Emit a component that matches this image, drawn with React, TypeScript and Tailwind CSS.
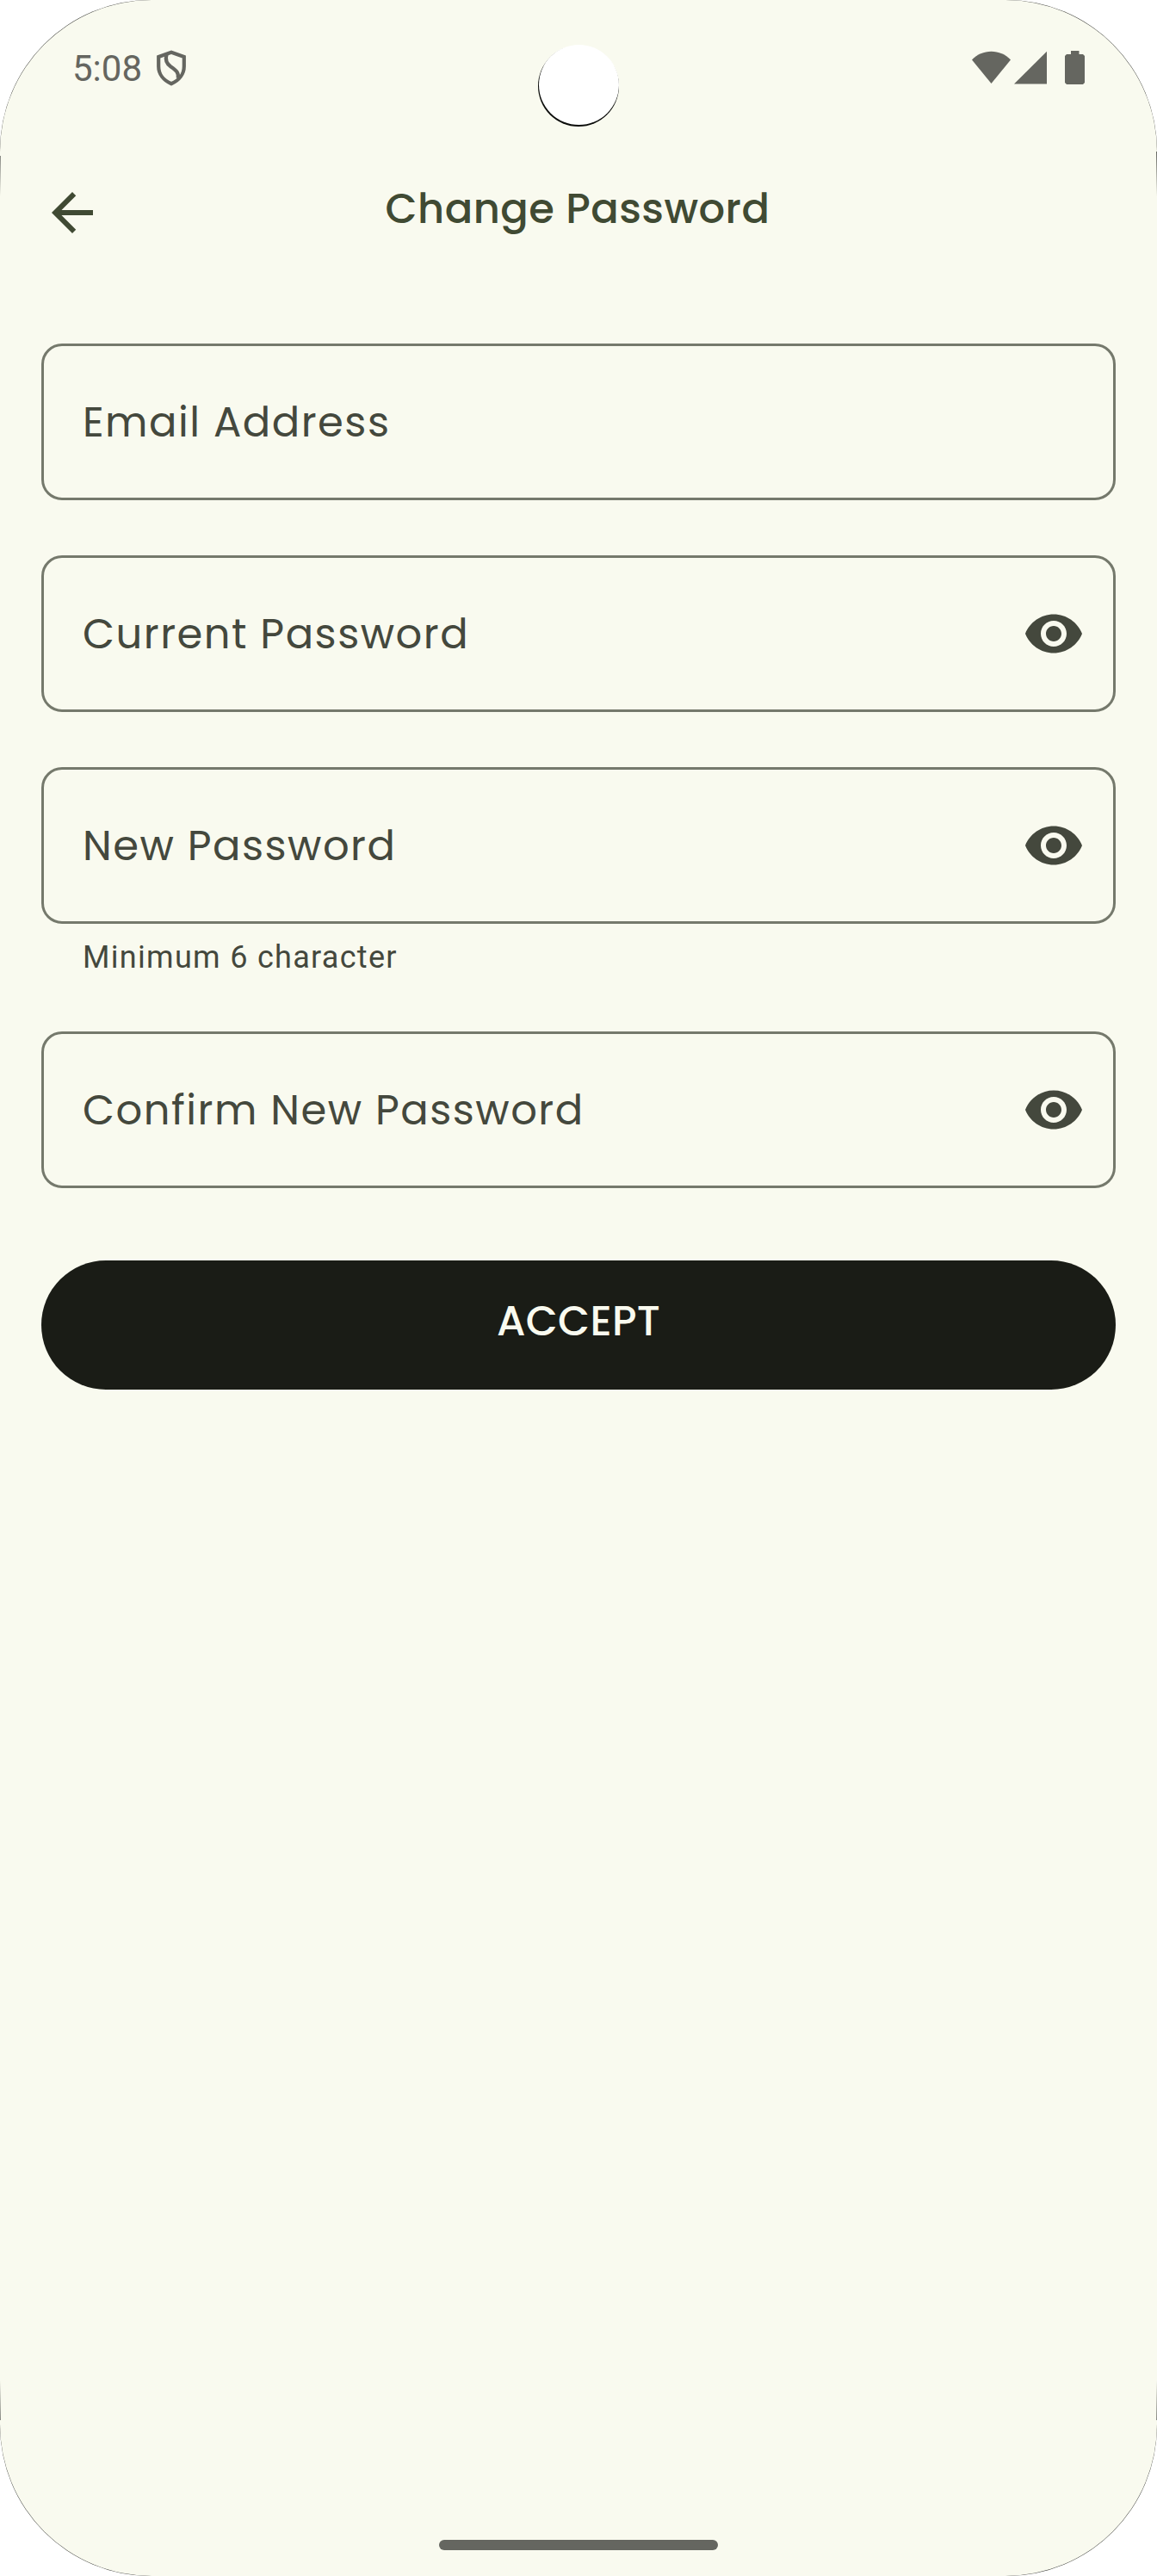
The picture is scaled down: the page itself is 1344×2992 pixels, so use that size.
import React from 'react';

const geometric = "font-['Poppins','Inter',sans-serif] [font-variant-ligatures:none]";

function ShieldIcon() {
  return (
    <svg viewBox="0 0 34 42" className="h-[42px] w-[34px]" fill="none" stroke="#656660">
      <path d="M17 2.800 2.200 8V19C2.200 28 8 35.500 17 39.200C26 35.500 31.800 28 31.800 19V8Z" strokeWidth="4.200" />
      <path d="M11.500 5.500C9.500 12 11.500 16 16.500 19.500C22.500 23.500 26 26.500 24.800 33" strokeWidth="4.200" />
    </svg>
  );
}

function StatusBar() {
  return (
    <header className="flex h-[159px] items-start justify-between pr-[84px] pl-[84px]">
      <div className="flex pt-[58px]">
        <span className="-mt-[3px] w-[98px] font-['Roboto',sans-serif] text-[42px] leading-[50px] whitespace-nowrap text-[#656660]">
          5:08
        </span>
        <ShieldIcon />
      </div>
      <div className="flex pt-[59px]">
        <svg viewBox="0 0 45 39" className="h-[39px] w-[45px]" fill="#656660">
          <path d="M22.500 38 0 10.500C6 4.200 14 .8 22.500 .8S39 4.200 45 10.500Z" />
        </svg>
        <svg viewBox="0 0 38 39" className="ml-1 h-[39px] w-[38px]" fill="#656660">
          <path d="M0 38.500H38V.8Z" />
        </svg>
        <svg viewBox="0 0 23 39" className="ml-[21px] h-[39px] w-[23px]" fill="#656660">
          <path d="M7 0H16.500V4H21L23 6V37L21 39H2L0 37V6L2 4H7Z" />
        </svg>
      </div>
    </header>
  );
}

function EyeIcon() {
  return (
    <svg viewBox="0 0 24 24" className="size-[72px]" fill="#44483d">
      <path d="M12 4.500C7 4.500 2.730 7.610 1 12c1.730 4.390 6 7.500 11 7.500s9.270-3.110 11-7.500c-1.730-4.390-6-7.500-11-7.500zM12 17c-2.760 0-5-2.240-5-5s2.240-5 5-5 5 2.240 5 5-2.240 5-5 5zm0-8c-1.660 0-3 1.340-3 3s1.340 3 3 3 3-1.340 3-3-1.340-3-3-3z" />
    </svg>
  );
}

function Field({ label, secret = true }: { label: string; secret?: boolean }) {
  return (
    <div className="flex h-[182px] items-center justify-between rounded-[24px] border-[3px] border-[#75796c] pr-[33px] pl-[45px]">
      <span className={`${geometric} mt-[2px] text-[48px] leading-[60px] tracking-[1.5px] whitespace-nowrap text-[#44483d]`}>
        {label}
      </span>
      {secret && (
        <button aria-label="Show password">
          <EyeIcon />
        </button>
      )}
    </div>
  );
}

function ScreenEdges() {
  return (
    <>
      <div className="absolute top-[181px] left-0 h-[47px] w-px bg-linear-to-b from-[#888983] to-[#f9faef]" />
      <div className="absolute top-[176px] right-0 h-[52px] w-px bg-linear-to-b from-[#666762] to-[#f9faef]" />
      <div className="absolute bottom-[181px] left-0 h-[46px] w-px bg-linear-to-t from-[#888983] to-[#f9faef]" />
      <div className="absolute right-0 bottom-[181px] h-[46px] w-px bg-linear-to-t from-[#888983] to-[#f9faef]" />
    </>
  );
}

export default function App() {
  return (
    <div className="h-[2992px] w-[1344px] bg-white">
      <div className="relative h-full rounded-[175px] bg-[#3a3b37]">
        <div className="flex h-full flex-col rounded-[176px] bg-[#f9faef]">
          <StatusBar />
          <div className="flex h-[240px] items-start px-[48px] pt-[52px]">
            <button aria-label="Back">
              <svg viewBox="0 0 24 24" className="size-[72px]" fill="#404a33">
                <path d="M20 11H7.830l5.590-5.590L12 4l-8 8 8 8 1.410-1.410L7.830 13H20v-2z" />
              </svg>
            </button>
            <h1 className={`${geometric} mt-[2px] mr-[74px] flex-1 text-center text-[48px] leading-[60px] font-medium tracking-[0.45px] text-[#404a33]`}>
              Change Password
            </h1>
          </div>
          <main className="flex flex-col px-[48px]">
            <div className="flex flex-col gap-[64px]">
              <Field label="Email Address" secret={false} />
              <Field label="Current Password" />
              <Field label="New Password" />
            </div>
            <p className="mt-[15px] mb-[62px] pl-[48px] font-['Roboto',sans-serif] text-[36px] leading-[48px] tracking-[1.3px] text-[#44483d]">
              Minimum 6 character
            </p>
            <Field label="Confirm New Password" />
            <button className={`${geometric} mt-[84px] h-[150px] rounded-full bg-[#1a1c16] pb-[8px] text-[48px] leading-[60px] font-medium tracking-[0.3px] text-[#f9faef]`}>
              ACCEPT
            </button>
          </main>
          <div className="mx-auto mt-auto mb-[30px] h-[12px] w-[324px] rounded-full bg-[#656660]" />
        </div>
        <div className="absolute top-[53px] left-[625px] size-[94px] rounded-full bg-[#0b0c0a]" />
        <div className="absolute top-[52px] left-[625.5px] size-[93px] rounded-full bg-white" />
        <ScreenEdges />
      </div>
    </div>
  );
}
